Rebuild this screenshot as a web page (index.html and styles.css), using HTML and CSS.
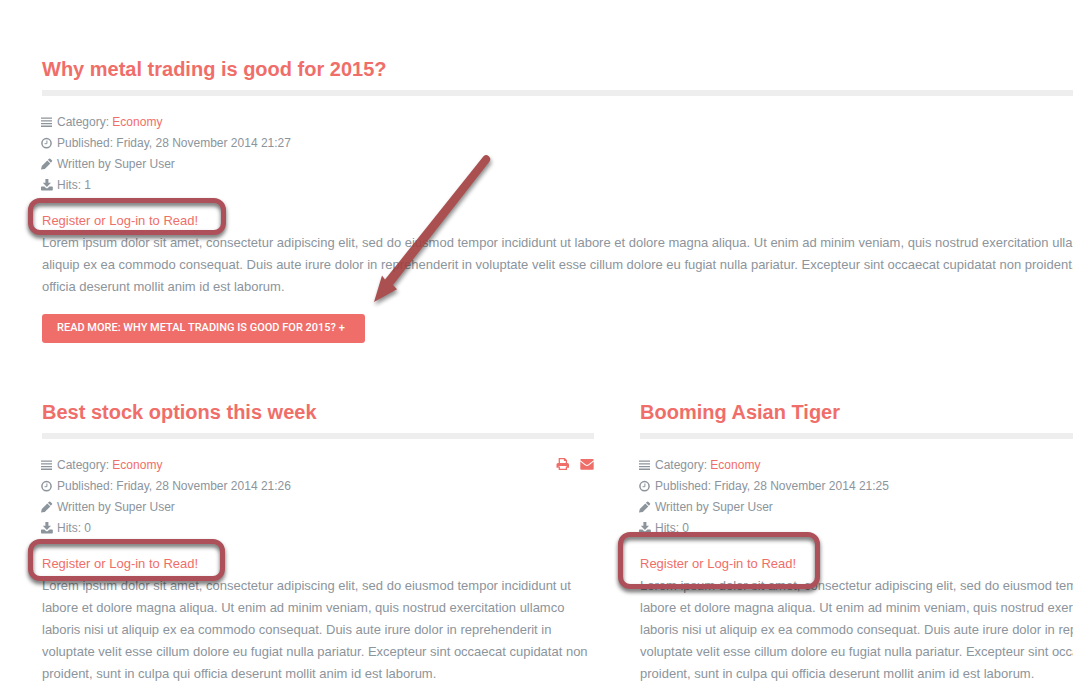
FILE: index.html
```html
<!DOCTYPE html>
<html lang="en">

<head>
    <meta charset="utf-8">
    <title>Economy</title>
    <link rel="stylesheet" href="styles.css">
</head>

<body>
    <svg class="sprite" aria-hidden="true">
        <symbol id="icon-list" viewBox="0 0 12 12">
            <path d="M0 1.500h11v1.300H0zM0 4.200h11v1.300H0zM0 6.900h11v1.300H0zM0 9.600h11v1.300H0z"/>
        </symbol>
        <symbol id="icon-clock" viewBox="0 0 12 12">
            <circle cx="5.5" cy="6.2" r="4.6" fill="none" stroke="currentColor" stroke-width="1.5"/>
            <path d="M5.9 3.5v3.2H3.6" fill="none" stroke="currentColor" stroke-width="1"/>
        </symbol>
        <symbol id="icon-pencil" viewBox="0 0 12 12">
            <path d="M0 11.500l.8-3.600L6.300 2.400l3 3-5.500 5.500zM6.900 1.800L8.100.7q.6-.5 1.200 0l1.600 1.600q.6.6 0 1.200L9.900 4.800z"/>
        </symbol>
        <symbol id="icon-download" viewBox="0 0 12 12">
            <path d="M4.400 0h3v3.800h2.600L5.900 7.900 1.800 3.800h2.600zM.7 7.400h2.700l1.300 1.300q1.200 1 2.400 0l1.300-1.300h2.700q.7 0 .7.700v2.600q0 .7-.7.700H.7q-.7 0-.7-.7V8.100q0-.7.7-.7z"/>
        </symbol>
        <symbol id="icon-print" viewBox="0 0 14 14">
            <path d="M3.300 7V1.700h5.200l1.900 1.900V7M3.300 9.400v3h7.100v-3" fill="none" stroke="currentColor" stroke-width="1.300"/>
            <path d="M7.900 1.500v2.600h2.700v-.8L8.800 1.500zM2 6h9.500Q13 6 13 7.500v3.200h-2.100V9H2.800v1.700H.5V7.500Q.5 6 2 6z"/>
        </symbol>
        <symbol id="icon-mail" viewBox="0 0 14 14">
            <path d="M1.300 2h11.400q1 0 1 1v.3L8.300 7.500Q7 8.400 5.700 7.500L.3 3.300V3q0-1 1-1z"/>
            <path d="M.3 4.500l4.700 3.700q2 1.500 4 0l4.700-3.700v7.300q0 1-1 1H1.300q-1 0-1-1z"/>
        </symbol>
    </svg>

    <main class="blog">
        <article class="post">
            <h2 class="post-title"><a href="#">Why metal trading is good for 2015?</a></h2>
            <ul class="post-meta">
                <li><svg class="icon"><use href="#icon-list"/></svg>Category: <a href="#">Economy</a></li>
                <li><svg class="icon"><use href="#icon-clock"/></svg>Published: Friday, 28 November 2014 21:27</li>
                <li><svg class="icon"><use href="#icon-pencil"/></svg>Written by Super User</li>
                <li><svg class="icon"><use href="#icon-download"/></svg>Hits: 1</li>
            </ul>
            <div class="register">
                <a href="#">Register or Log-in to Read!</a>
                <span class="highlight highlight-lead"></span>
            </div>
            <p class="post-text">Lorem ipsum dolor sit amet, consectetur adipiscing elit, sed do eiusmod tempor incididunt ut labore et dolore magna aliqua. Ut enim ad minim veniam, quis nostrud exercitation ullamco laboris nisi ut aliquip ex ea commodo consequat. Duis aute irure dolor in reprehenderit in voluptate velit esse cillum dolore eu fugiat nulla pariatur. Excepteur sint occaecat cupidatat non proident, sunt in culpa qui officia deserunt mollit anim id est laborum.</p>
            <a class="read-more" href="#">Read more: Why metal trading is good for 2015? +</a>
            <svg class="arrow" viewBox="0 0 130 160" aria-hidden="true">
                <path d="M119.500 11.500A4 4 0 0 0 113.500 6.300L15 129.500 12 125.500 4 152 27 139.300 23 135z"/>
            </svg>
        </article>

        <div class="post-row">
            <article class="post">
                <h2 class="post-title"><a href="#">Best stock options this week</a></h2>
                <div class="post-info">
                    <ul class="post-meta">
                        <li><svg class="icon"><use href="#icon-list"/></svg>Category: <a href="#">Economy</a></li>
                        <li><svg class="icon"><use href="#icon-clock"/></svg>Published: Friday, 28 November 2014 21:26</li>
                        <li><svg class="icon"><use href="#icon-pencil"/></svg>Written by Super User</li>
                        <li><svg class="icon"><use href="#icon-download"/></svg>Hits: 0</li>
                    </ul>
                    <div class="post-actions">
                        <a href="#" aria-label="Print"><svg class="action-icon"><use href="#icon-print"/></svg></a>
                        <a href="#" aria-label="Email"><svg class="action-icon"><use href="#icon-mail"/></svg></a>
                    </div>
                </div>
                <div class="register">
                    <a href="#">Register or Log-in to Read!</a>
                    <span class="highlight highlight-left"></span>
                </div>
                <p class="post-text">Lorem ipsum dolor sit amet, consectetur adipiscing elit, sed do eiusmod tempor incididunt ut labore et dolore magna aliqua. Ut enim ad minim veniam, quis nostrud exercitation ullamco laboris nisi ut aliquip ex ea commodo consequat. Duis aute irure dolor in reprehenderit in voluptate velit esse cillum dolore eu fugiat nulla pariatur. Excepteur sint occaecat cupidatat non proident, sunt in culpa qui officia deserunt mollit anim id est laborum.</p>
            </article>

            <article class="post">
                <h2 class="post-title"><a href="#">Booming Asian Tiger</a></h2>
                <ul class="post-meta">
                    <li><svg class="icon"><use href="#icon-list"/></svg>Category: <a href="#">Economy</a></li>
                    <li><svg class="icon"><use href="#icon-clock"/></svg>Published: Friday, 28 November 2014 21:25</li>
                    <li><svg class="icon"><use href="#icon-pencil"/></svg>Written by Super User</li>
                    <li><svg class="icon"><use href="#icon-download"/></svg>Hits: 0</li>
                </ul>
                <div class="register">
                    <a href="#">Register or Log-in to Read!</a>
                    <span class="highlight highlight-right"></span>
                </div>
                <p class="post-text">Lorem ipsum dolor sit amet, consectetur adipiscing elit, sed do eiusmod tempor incididunt ut labore et dolore magna aliqua. Ut enim ad minim veniam, quis nostrud exercitation ullamco laboris nisi ut aliquip ex ea commodo consequat. Duis aute irure dolor in reprehenderit in voluptate velit esse cillum dolore eu fugiat nulla pariatur. Excepteur sint occaecat cupidatat non proident, sunt in culpa qui officia deserunt mollit anim id est laborum.</p>
            </article>
        </div>
    </main>
</body>

</html>
```

FILE: styles.css
```css
:root {
    --primary-color: #f06e69;
    --text-color: #8c949c;
    --rule-color: #eee;
    --marker-color: #ae5059;
}

* {
    box-sizing: border-box;
    margin: 0;
    padding: 0;
}

body {
    font-family: "Liberation Sans", Helvetica, Arial, sans-serif;
    font-size: 13px;
    line-height: 22px;
    color: var(--text-color);
    background: #fff;
    overflow-x: hidden;
}

a {
    color: var(--primary-color);
    text-decoration: none;
}

.sprite {
    display: none;
}

/* the columns keep their desktop width and run past narrow windows */
.blog {
    min-width: 1234px;
    padding: 54px 42px 0;
}

.post {
    position: relative;
}

.post-row {
    display: grid;
    grid-template-columns: 1fr 1fr;
    gap: 46px;
    margin-top: 54px;
}

.post-title {
    padding-bottom: 6px;
    border-bottom: 6px solid var(--rule-color);
    font-size: 20px;
    line-height: 30px;
}

.post-info {
    display: flex;
    justify-content: space-between;
}

.post-meta {
    margin-top: 16px;
    list-style: none;
    font-size: 12px;
    line-height: 21px;
}

.icon {
    width: 12px;
    height: 12px;
    margin-right: 4px;
    margin-left: -1px;
    vertical-align: -2px;
    fill: currentColor;
}

.post-actions {
    display: flex;
    gap: 10px;
    margin-top: 18px;
}

.action-icon {
    display: block;
    width: 14px;
    height: 14px;
    fill: currentColor;
}

.register {
    position: relative;
    margin-top: 14px;
}

.highlight {
    position: absolute;
    z-index: 1;
    border: 5px solid var(--marker-color);
    border-radius: 12px;
    filter: drop-shadow(0 3px 2px rgba(0, 0, 0, 0.6));
    pointer-events: none;
}

.highlight-lead {
    top: -12px;
    left: -14px;
    width: 198px;
    height: 37px;
}

.highlight-left {
    top: -14px;
    left: -14px;
    width: 197px;
    height: 42px;
}

.highlight-right {
    top: -21px;
    left: -22px;
    width: 202px;
    height: 57px;
}

.read-more {
    display: inline-block;
    margin-top: 16px;
    padding: 0 20px 2px 15px;
    border-radius: 3px;
    background: var(--primary-color);
    color: #fff;
    font-family: Roboto, "Liberation Sans", sans-serif;
    font-size: 11px;
    font-weight: 500;
    line-height: 27px;
    text-transform: uppercase;
    vertical-align: top;
}

.arrow {
    position: absolute;
    top: 96px;
    left: 328px;
    width: 130px;
    height: 160px;
    fill: #a23e3e;
    opacity: 0.9;
    filter: drop-shadow(1px 3px 2px rgba(0, 0, 0, 0.5));
    pointer-events: none;
}
```
